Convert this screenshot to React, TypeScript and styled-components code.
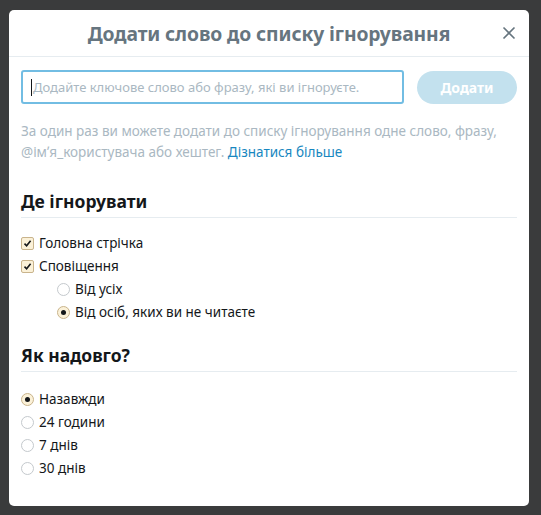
import styled, { createGlobalStyle } from 'styled-components';

const GlobalStyle = createGlobalStyle`
	html, body {
		margin: 0;
		padding: 0;
		background: #3a3b3c;
		font-family: 'Noto Sans', 'Open Sans', sans-serif;
	}
`;

const Page = styled.div`
	width: 541px;
	height: 515px;
	padding: 10px 12px 8px 9px;
	box-sizing: border-box;
`;

const Modal = styled.div`
	width: 520px;
	height: 496px;
	background: #fff;
	border-radius: 5px;
	overflow: hidden;
`;

const Header = styled.div`
	height: 46px;
	border-bottom: 1px solid #e6ecf0;
	display: flex;
	align-items: center;
	justify-content: center;
	position: relative;
`;

const Title = styled.h2`
	margin: 0;
	font-size: 19.3px;
	font-weight: 700;
	color: #66757f;
	letter-spacing: -0.1px;
`;

const CloseButton = styled.button`
	position: absolute;
	right: 12px;
	top: 15px;
	width: 16px;
	height: 16px;
	padding: 0;
	border: 0;
	background: none;
	display: flex;
	align-items: center;
	justify-content: center;
`;

const Body = styled.div`
	padding: 13px 12px 0 12px;
`;

const InputRow = styled.div`
	display: flex;
	align-items: center;
	gap: 13px;
`;

const Input = styled.div`
	flex: 1;
	height: 34px;
	box-sizing: border-box;
	border: 2px solid #72bde3;
	border-radius: 3px;
	display: flex;
	align-items: center;
	padding: 0 8px;
	font-size: 13px;
	color: #aab8c2;
	white-space: nowrap;
	overflow: hidden;
`;

const Caret = styled.span`
	display: inline-block;
	width: 1px;
	height: 17px;
	background: #14171a;
	margin-right: 1px;
`;

const AddButton = styled.button`
	width: 100px;
	height: 33px;
	border: 0;
	border-radius: 17px;
	background: #c3e1ee;
	color: #fff;
	font-family: inherit;
	font-size: 14px;
	font-weight: 700;
	padding: 0;
`;

const Help = styled.p`
	margin: 17px 0 0;
	font-size: 13.5px;
	line-height: 21px;
	color: #aab8c2;
`;

const Link = styled.a`
	color: #1887c0;
	text-decoration: none;
`;

const Section = styled.div<{ $top: number }>`
	margin-top: ${(p) => p.$top}px;
`;

const SectionTitle = styled.h3`
	margin: 0;
	font-size: 17.5px;
	font-weight: 700;
	color: #14171a;
	padding-bottom: 4px;
	border-bottom: 1px solid #e6ecf0;
	line-height: 24px;
`;

const Options = styled.div<{ $top: number }>`
	padding-top: ${(p) => p.$top}px;
	display: flex;
	flex-direction: column;
	gap: 5px;
`;

const Option = styled.label<{ $indent?: boolean }>`
	display: flex;
	align-items: center;
	gap: 5px;
	height: 18px;
	font-size: 13.5px;
	color: #14171a;
	padding-left: ${(p) => (p.$indent ? '36px' : '0')};
`;

const Box = styled.span`
	width: 11px;
	height: 11px;
	border: 1px solid #c9b48c;
	background: #fbf1d8;
	border-radius: 2px;
	display: flex;
	align-items: center;
	justify-content: center;
`;

const Radio = styled.span<{ $checked?: boolean }>`
	width: 11px;
	height: 11px;
	border-radius: 50%;
	border: 1px solid ${(p) => (p.$checked ? '#c9b48c' : '#c4c9cd')};
	background: ${(p) => (p.$checked ? '#fbf1d8' : '#fff')};
	display: flex;
	align-items: center;
	justify-content: center;

	&::after {
		content: '';
		width: 5px;
		height: 5px;
		border-radius: 50%;
		background: ${(p) => (p.$checked ? '#14171a' : 'transparent')};
	}
`;

const Check = () => (
	<Box>
		<svg width="9" height="9" viewBox="0 0 9 9">
			<path d="M1.5 4.6 L3.6 6.7 L7.6 1.8" fill="none" stroke="#14171a" strokeWidth="1.6" />
		</svg>
	</Box>
);

const App = () => {
	return (
		<>
			<GlobalStyle />
			<Page>
				<Modal>
					<Header>
						<Title>Додати слово до списку ігнорування</Title>
						<CloseButton>
							<svg width="14" height="14" viewBox="0 0 14 14">
								<path d="M1.5 1.5 L12.5 12.5 M12.5 1.5 L1.5 12.5" stroke="#66757f" strokeWidth="1.6" />
							</svg>
						</CloseButton>
					</Header>
					<Body>
						<InputRow>
							<Input>
								<Caret />
								Додайте ключове слово або фразу, які ви ігноруєте.
							</Input>
							<AddButton>Додати</AddButton>
						</InputRow>
						<Help>
							За один раз ви можете додати до списку ігнорування одне слово, фразу,
							@імʼя_користувача або хештег. <Link>Дізнатися більше</Link>
						</Help>
						<Section $top={26}>
							<SectionTitle>Де ігнорувати</SectionTitle>
							<Options $top={16}>
								<Option>
									<Check />
									Головна стрічка
								</Option>
								<Option>
									<Check />
									Сповіщення
								</Option>
								<Option $indent>
									<Radio />
									Від усіх
								</Option>
								<Option $indent>
									<Radio $checked />
									Від осіб, яких ви не читаєте
								</Option>
							</Options>
						</Section>
						<Section $top={22}>
							<SectionTitle>Як надовго?</SectionTitle>
							<Options $top={18}>
								<Option>
									<Radio $checked />
									Назавжди
								</Option>
								<Option>
									<Radio />
									24 години
								</Option>
								<Option>
									<Radio />
									7 днів
								</Option>
								<Option>
									<Radio />
									30 днів
								</Option>
							</Options>
						</Section>
					</Body>
				</Modal>
			</Page>
		</>
	);
};

export default App;
